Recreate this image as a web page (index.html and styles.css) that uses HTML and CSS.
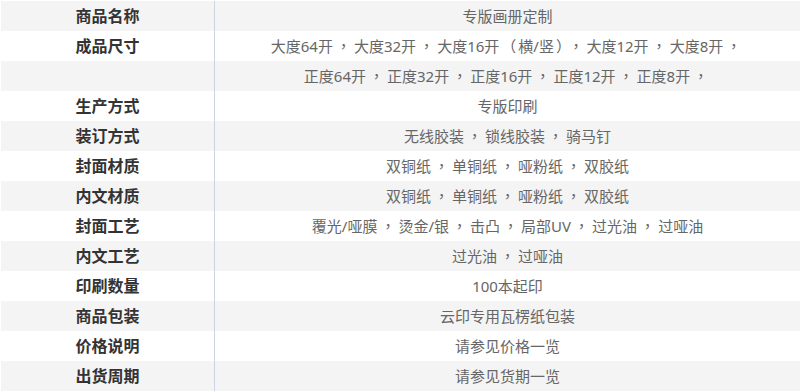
FILE: index.html
```html
<!DOCTYPE html>
<html lang="zh-CN">
<head>
<meta charset="utf-8">
<title>商品参数</title>
<link rel="stylesheet" href="styles.css">
</head>
<body>
<table class="spec">
  <tbody>
    <tr class="odd"><th class="label">商品名称</th><td class="value">专版画册定制</td></tr>
    <tr class="even"><th class="label">成品尺寸</th><td class="value">大度64开<span class="p" lang="zh-TW">，</span>大度32开<span class="p" lang="zh-TW">，</span>大度16开<span class="br" lang="zh-TW">（</span>横/竖<span class="br" lang="zh-TW">）</span><span class="p" lang="zh-TW">，</span>大度12开<span class="p" lang="zh-TW">，</span>大度8开<span class="p" lang="zh-TW">，</span></td></tr>
    <tr class="odd"><th class="label"></th><td class="value">正度64开<span class="p" lang="zh-TW">，</span>正度32开<span class="p" lang="zh-TW">，</span>正度16开<span class="p" lang="zh-TW">，</span>正度12开<span class="p" lang="zh-TW">，</span>正度8开<span class="p" lang="zh-TW">，</span></td></tr>
    <tr class="even"><th class="label">生产方式</th><td class="value">专版印刷</td></tr>
    <tr class="odd"><th class="label">装订方式</th><td class="value">无线胶装<span class="p" lang="zh-TW">，</span>锁线胶装<span class="p" lang="zh-TW">，</span>骑马钉</td></tr>
    <tr class="even"><th class="label">封面材质</th><td class="value">双铜纸<span class="p" lang="zh-TW">，</span>单铜纸<span class="p" lang="zh-TW">，</span>哑粉纸<span class="p" lang="zh-TW">，</span>双胶纸</td></tr>
    <tr class="odd"><th class="label">内文材质</th><td class="value">双铜纸<span class="p" lang="zh-TW">，</span>单铜纸<span class="p" lang="zh-TW">，</span>哑粉纸<span class="p" lang="zh-TW">，</span>双胶纸</td></tr>
    <tr class="even"><th class="label">封面工艺</th><td class="value">覆光/哑膜<span class="p" lang="zh-TW">，</span>烫金/银<span class="p" lang="zh-TW">，</span>击凸<span class="p" lang="zh-TW">，</span>局部UV<span class="p" lang="zh-TW">，</span>过光油<span class="p" lang="zh-TW">，</span>过哑油</td></tr>
    <tr class="odd"><th class="label">内文工艺</th><td class="value">过光油<span class="p" lang="zh-TW">，</span>过哑油</td></tr>
    <tr class="even"><th class="label">印刷数量</th><td class="value">100本起印</td></tr>
    <tr class="odd"><th class="label">商品包装</th><td class="value">云印专用瓦楞纸包装</td></tr>
    <tr class="even"><th class="label">价格说明</th><td class="value">请参见价格一览</td></tr>
    <tr class="odd"><th class="label">出货周期</th><td class="value">请参见货期一览</td></tr>
  </tbody>
</table>
</body>
</html>
```
FILE: styles.css
```css
html, body {
  margin: 0;
  padding: 0;
  background: #ffffff;
}
body {
  font-family: "Noto Sans", "Noto Sans CJK SC", sans-serif;
  overflow: hidden;
}
.spec {
  border-collapse: collapse;
  border-spacing: 0;
  margin: 1px 0 0 1px;
  width: 799px;
  table-layout: fixed;
}
.spec tr {
  height: 30px;
}
.spec .odd {
  background: #f4f4f4;
}
.spec .even {
  background: #ffffff;
}
.label {
  width: 213px;
  padding: 0;
  font-size: 16px;
  font-weight: bold;
  color: #333333;
  text-align: center;
  vertical-align: middle;
  line-height: 30px;
}
.value {
  padding: 0;
  border-left: 1px solid #cbd4e4;
  font-size: 15px;
  font-weight: normal;
  color: #666666;
  text-align: center;
  vertical-align: middle;
  line-height: 30px;
  white-space: nowrap;
}
.p {
  font-family: "Noto Sans CJK TC", sans-serif;
  padding: 0 3px;
}
.br {
  font-family: "Noto Sans CJK TC", sans-serif;
  padding: 0 2px;
}
```
